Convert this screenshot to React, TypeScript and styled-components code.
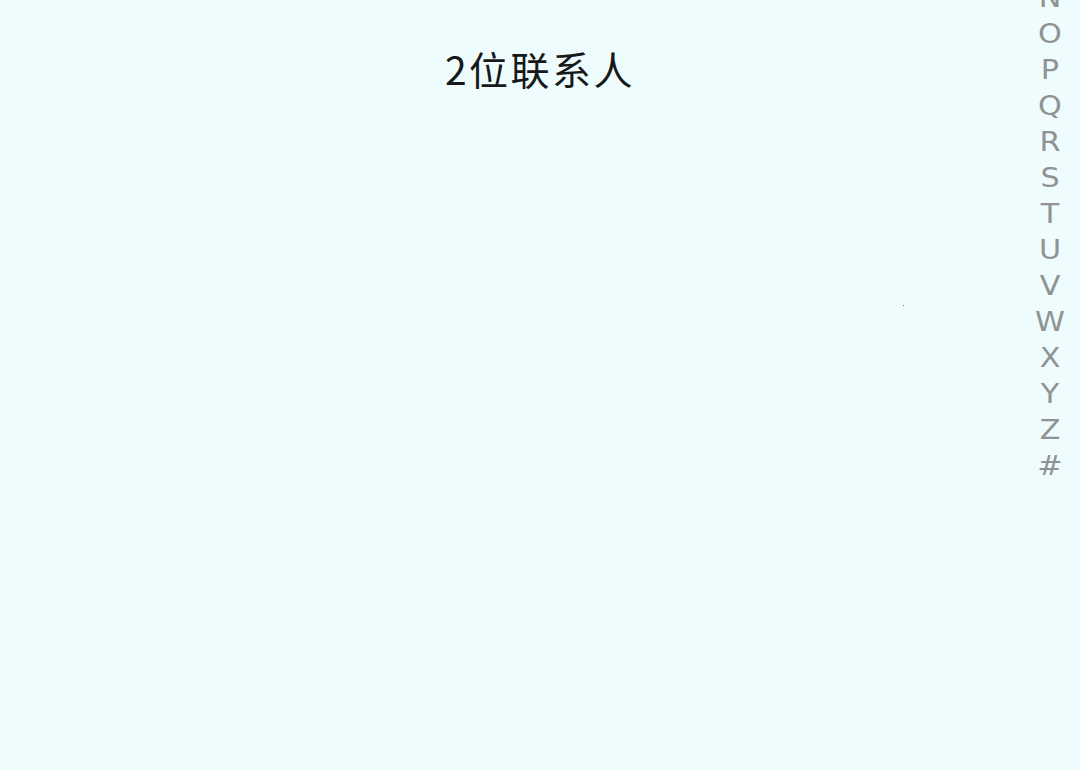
import React from 'react';
import styled, { createGlobalStyle } from 'styled-components';

const GlobalStyle = createGlobalStyle`
  html, body {
    margin: 0;
    padding: 0;
    background: #eefcfd;
    font-family: 'Liberation Sans', 'Noto Sans CJK SC', sans-serif;
    overflow: hidden;
  }
`;

const Page = styled.div`
  position: relative;
  width: 1080px;
  height: 770px;
  background: #eefcfd;
  overflow: hidden;
`;

const Title = styled.h1`
  margin: 0;
  padding-top: 43px;
  text-align: center;
  font-family: 'Noto Sans CJK SC', sans-serif;
  font-weight: 400;
  font-size: 39px;
  line-height: 50px;
  letter-spacing: 2.5px;
  color: #161819;
`;

const IndexBar = styled.ul`
  position: absolute;
  right: 0px;
  top: -488px;
  width: 60px;
  margin: 0;
  padding: 0;
  list-style: none;
`;

const IndexItem = styled.li`
  height: 36px;
  line-height: 36px;
  text-align: center;
  font-family: 'DejaVu Sans', sans-serif;
  font-size: 27px;
  color: #8e9394;
  transform: scaleX(1.12);
`;

const Dot = styled.span`
  position: absolute;
  left: 903px;
  top: 305px;
  width: 1px;
  height: 1px;
  background: #6b7070;
`;

const letters = 'ABCDEFGHIJKLMNOPQRSTUVWXYZ#'.split('');

const App: React.FC = () => {
  return (
    <>
      <GlobalStyle />
      <Page>
        <Title>2位联系人</Title>
        <IndexBar>
          {letters.map((l) => (
            <IndexItem key={l}>{l}</IndexItem>
          ))}
        </IndexBar>
        <Dot />
      </Page>
    </>
  );
};

export default App;
